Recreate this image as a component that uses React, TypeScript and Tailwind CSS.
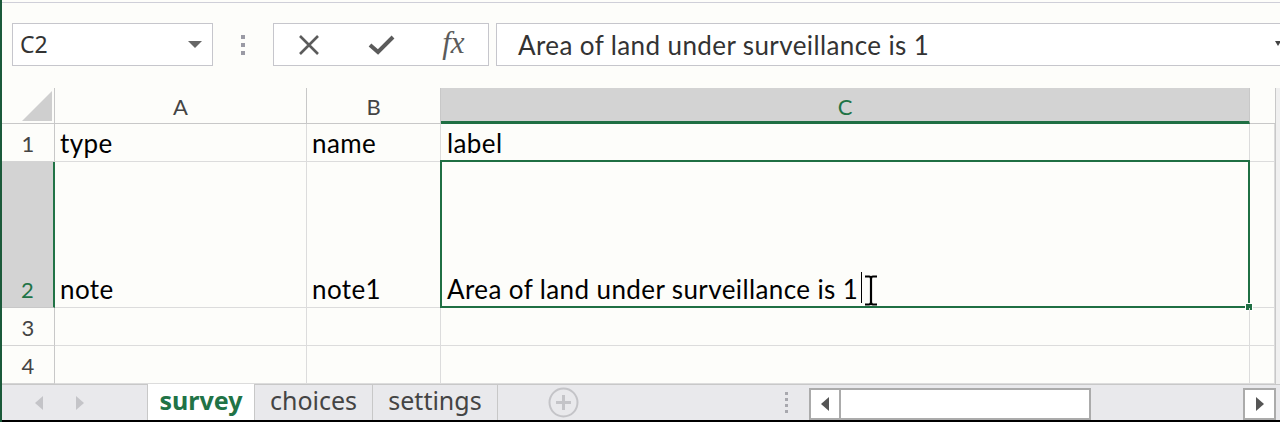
import React from "react";

const cellFont = "font-['Lato','Liberation_Sans',sans-serif]";
const uiFont = "font-['Noto_Sans','Open_Sans',sans-serif]";
const cellText = "text-[26px] tracking-[0.4px] leading-[30px] text-black";

function Row({
  h,
  num,
  a,
  b,
  c,
  selected,
}: {
  h: string;
  num: string;
  a?: string;
  b?: string;
  c?: React.ReactNode;
  selected?: boolean;
}) {
  return (
    <div className={`flex ${h}`}>
      <div
        className={`w-[53px] shrink-0 flex items-end justify-center pb-[4px] text-[22px] leading-[26px] border-b ${
          selected
            ? "bg-[#d3d3d3] text-[#217346] border-r-2 border-r-[#217346] border-b-[#c8c8c8]"
            : "text-[#444] border-r border-r-[#c8c8c8] border-b-[#d4d4d4]"
        }`}
      >
        {num}
      </div>
      <div className={`w-[252px] shrink-0 border-r border-b border-[#dcdcdc] flex items-end pl-[5px] pb-[3px] ${cellText}`}>
        {a}
      </div>
      <div className={`w-[134px] shrink-0 border-r border-b border-[#dcdcdc] flex items-end pl-[5px] pb-[3px] ${cellText}`}>
        {b}
      </div>
      <div className={`w-[809px] shrink-0 border-r border-b border-[#dcdcdc] flex items-end pl-[6px] pb-[3px] relative ${cellText}`}>
        {c}
        {selected && (
          <>
            <div className="absolute -top-[2px] -left-[1px] -right-[1px] -bottom-[1px] border-2 border-[#1f6f43]" />
            <div className="absolute -right-[4px] -bottom-[4px] w-[8px] h-[8px] bg-[#1f6f43] border border-white" />
          </>
        )}
      </div>
      <div className="w-[25px] shrink-0 border-r border-b border-[#dcdcdc]" />
      <div className="flex-1 bg-[#f0f0f0] border-l border-[#c8c8c8]" />
    </div>
  );
}

export default function App() {
  return (
    <div
      className={`w-[1280px] h-[422px] overflow-hidden bg-[#fdfdfa] border-l-2 border-[#1b5a3a] flex flex-col ${cellFont}`}
    >
      {/* formula bar area */}
      <div className="h-[2px] shrink-0" />
      <div className="h-[86px] shrink-0 border-t border-[#cfcfd8] flex items-start pt-[20px]">
        <div
          className={`ml-[10px] w-[201px] h-[43px] shrink-0 border border-[#c6c6cc] bg-white flex items-center justify-between pl-[7px] pr-[10px] ${uiFont}`}
        >
          <span className="text-[23px] text-[#333] leading-none">C2</span>
          <svg width="14" height="7" viewBox="0 0 14 7">
            <path d="M0 0 L14 0 L7 7 Z" fill="#666" />
          </svg>
        </div>
        <div className="w-[60px] shrink-0 h-[43px] flex flex-col items-center justify-center gap-[4px]">
          <div className="w-[4px] h-[4px] bg-[#9a9aa4]" />
          <div className="w-[4px] h-[4px] bg-[#9a9aa4]" />
          <div className="w-[4px] h-[4px] bg-[#9a9aa4]" />
        </div>
        <div className="w-[216px] h-[43px] shrink-0 border border-[#c6c6cc] bg-white flex items-center justify-around">
          <svg width="24" height="22" viewBox="0 0 24 22">
            <path d="M3 2 L21 20 M21 2 L3 20" stroke="#5b5b5b" strokeWidth="2.6" />
          </svg>
          <svg width="27" height="21" viewBox="0 0 27 21">
            <path d="M2 11 L10 18 L25 3" stroke="#5b5b5b" strokeWidth="4" fill="none" />
          </svg>
          <span className="font-['Liberation_Serif',serif] italic text-[31px] text-[#5b5b5b] leading-none -mt-[4px]">
            fx
          </span>
        </div>
        <div className="ml-[7px] flex-1 -mr-[20px] h-[43px] border border-[#c6c6cc] bg-white flex items-center pl-[21px] relative">
          <span className="text-[26px] tracking-[0.4px] leading-none text-[#333]">
            Area of land under surveillance is 1
          </span>
          <svg className="absolute right-[18px] top-[17px]" width="6" height="6" viewBox="0 0 6 6">
            <path d="M0 0 L6 0 L3 5 Z" fill="#444" />
          </svg>
        </div>
      </div>

      {/* column headers */}
      <div className="flex h-[36px] shrink-0">
        <div className="w-[53px] shrink-0 border-r border-b border-[#c8c8c8] flex items-end justify-end pr-[2px] pb-[2px]">
          <svg width="30" height="30" viewBox="0 0 30 30">
            <path d="M30 0 L30 30 L0 30 Z" fill="#cfcfcf" />
          </svg>
        </div>
        <div className="w-[252px] shrink-0 border-r border-b border-[#c8c8c8] flex items-end justify-center pb-[3px] text-[22px] leading-[26px] text-[#444]">
          A
        </div>
        <div className="w-[134px] shrink-0 border-r border-b border-[#c8c8c8] flex items-end justify-center pb-[3px] text-[22px] leading-[26px] text-[#444]">
          B
        </div>
        <div className="w-[809px] shrink-0 bg-[#d3d3d3] border-r border-[#c8c8c8] border-b-[3px] border-b-[#1f6f43] flex items-end justify-center pb-[1px] text-[22px] leading-[26px] text-[#217346]">
          C
        </div>
        <div className="w-[25px] shrink-0 border-b border-[#c8c8c8]" />
        <div className="flex-1 bg-[#f0f0f0] border-l border-[#c8c8c8]" />
      </div>

      <Row h="h-[38px]" num="1" a="type" b="name" c="label" />
      <Row
        h="h-[146px]"
        num="2"
        a="note"
        b="note1"
        selected
        c={
          <span className="flex items-end">
            <span>Area of land under surveillance is 1</span>
            <span className="relative ml-[3px] mb-[1px] w-[1px] h-[31px] bg-black">
              <svg
                className="absolute left-[3px] top-[3px]"
                width="14"
                height="31"
                viewBox="0 0 14 31"
              >
                <path
                  d="M1 1.5 H5 Q7 1.5 7 4 V27 Q7 29.5 5 29.5 H1 M13 1.5 H9 Q7 1.5 7 4 M7 27 Q7 29.5 9 29.5 H13"
                  stroke="#000"
                  strokeWidth="2.2"
                  fill="none"
                />
              </svg>
            </span>
          </span>
        }
      />
      <Row h="h-[38px]" num="3" />
      <Row h="h-[38px]" num="4" />

      {/* sheet tabs */}
      <div className={`h-[36px] shrink-0 bg-[#e9e9ec] border-t border-[#c8c8c8] flex items-stretch ${uiFont}`}>
        <div className="w-[145px] shrink-0 flex items-center">
          <svg className="ml-[33px]" width="9" height="14" viewBox="0 0 9 14">
            <path d="M8 0 L0 7 L8 14 Z" fill="#c4c4c8" />
          </svg>
          <svg className="ml-[31px]" width="9" height="14" viewBox="0 0 9 14">
            <path d="M1 0 L9 7 L1 14 Z" fill="#c4c4c8" />
          </svg>
        </div>
        <div className="w-[108px] shrink-0 -mt-[1px] bg-white border-l border-r border-[#c8c8c8] flex items-center justify-center font-bold text-[25px] text-[#217346] leading-none pb-[4px]">
          survey
        </div>
        <div className="w-[118px] shrink-0 border-r border-[#c8c8c8] flex items-center justify-center text-[25px] text-[#444] leading-none pb-[4px]">
          choices
        </div>
        <div className="w-[125px] shrink-0 border-r border-[#c8c8c8] flex items-center justify-center text-[25px] text-[#444] leading-none pb-[4px]">
          settings
        </div>
        <div className="w-[50px] shrink-0" />
        <div className="w-[31px] shrink-0 flex items-center">
          <svg width="31" height="31" viewBox="0 0 31 31">
            <circle cx="15.5" cy="15.5" r="14" stroke="#c4c4c8" strokeWidth="2" fill="none" />
            <path d="M15.5 8 V23 M8 15.5 H23" stroke="#c4c4c8" strokeWidth="3" />
          </svg>
        </div>
        <div className="w-[230px] shrink-0 flex flex-col items-end justify-center gap-[3px] pr-[21px]">
          <div className="w-[3px] h-[3px] bg-[#a8a8ae]" />
          <div className="w-[3px] h-[3px] bg-[#a8a8ae]" />
          <div className="w-[3px] h-[3px] bg-[#a8a8ae]" />
          <div className="w-[3px] h-[3px] bg-[#a8a8ae]" />
        </div>
        <div className="flex-1 flex items-stretch pt-[3px] pr-[4px]">
          <div className="w-[32px] shrink-0 bg-white border-2 border-[#ababab] flex items-center justify-center">
            <svg width="8" height="14" viewBox="0 0 8 14">
              <path d="M8 0 L0 7 L8 14 Z" fill="#555" />
            </svg>
          </div>
          <div className="w-[250px] shrink-0 bg-white border-y-2 border-r-2 border-[#ababab]" />
          <div className="flex-1" />
          <div className="w-[33px] shrink-0 bg-white border-2 border-[#ababab] flex items-center justify-center">
            <svg width="8" height="14" viewBox="0 0 8 14">
              <path d="M0 0 L8 7 L0 14 Z" fill="#555" />
            </svg>
          </div>
        </div>
      </div>
      <div className="h-[2px] shrink-0 bg-black" />
    </div>
  );
}
